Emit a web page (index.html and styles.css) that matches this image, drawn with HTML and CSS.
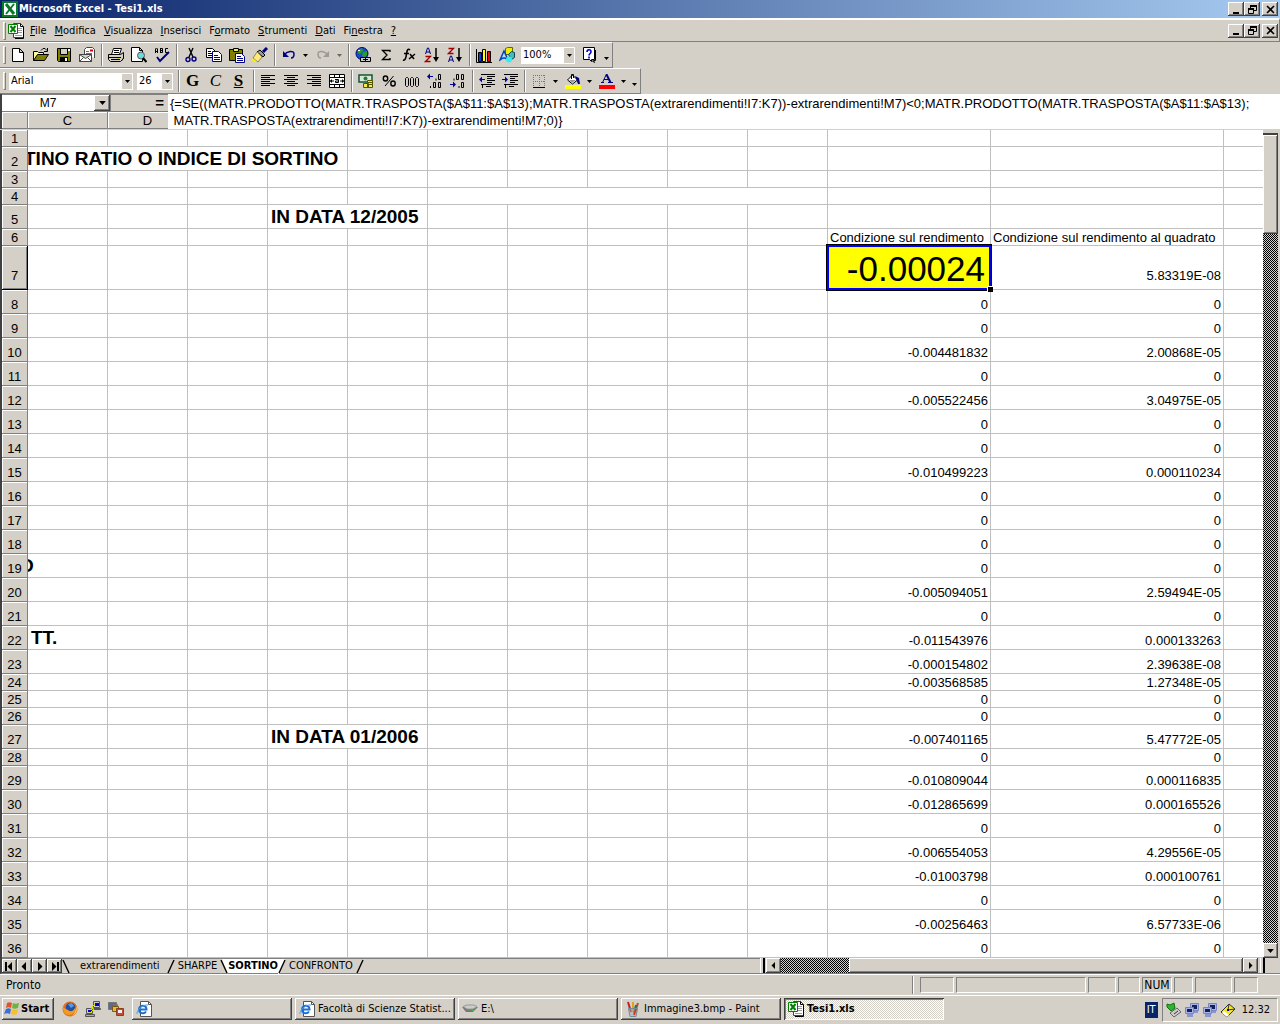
FILE: index.html
```html
<!DOCTYPE html>
<html lang="it">
<head>
<meta charset="utf-8">
<title>Microsoft Excel - Tesi1.xls</title>
<link rel="stylesheet" href="styles.css">
</head>
<body>
<svg class="defs" aria-hidden="true">
  <symbol id="xl" viewBox="0 0 16 16"><path fill="#fff" stroke="#444" d="M5.500 .5h7l3 3v11h-10z"/><path fill="none" stroke="#000" d="M15.500 4v11.500H7M12.500 .5v3h3"/><path stroke="#999" d="M10 5.500h4M10 7.500h4M10 9.500h4M7 12.500h7"/><path fill="#fff" stroke="#008000" d="M.5 1.500h9v9h-9z"/><path stroke="#008000" stroke-width="2" d="M2.500 3l5 6M7.500 3l-5 6"/></symbol>
  <symbol id="ie" viewBox="0 0 16 16"><path fill="#fff" stroke="#555" d="M4.500 .5h8l3 3v12h-11z"/><path fill="none" stroke="#555" d="M12.500 .5v3h3"/><path fill="none" stroke="#1c6fd4" stroke-width="2" d="M2.500 8.500h8c0-5-7-5-7.500 0 0 4 5 5 7 2"/><path fill="none" stroke="#4aa3f0" d="M1 13C0 10 7 3 12 4"/></symbol>
  <symbol id="down" viewBox="0 0 5 3"><path d="M0 0h5L2.500 3z"/></symbol>
  <symbol id="min" viewBox="0 0 9 9"><path d="M1 7h6v2H1z"/></symbol>
  <symbol id="restore" viewBox="0 0 9 9"><path fill="none" stroke="#000" d="M2.500 3V.5h6v5H6M.5 3.500h5v5h-5z"/><path d="M2 0h7v2H2zM0 3h6v2H0z"/></symbol>
  <symbol id="close" viewBox="0 0 9 9"><path stroke="#000" stroke-width="1.600" d="M1 1l7 7M8 1L1 8"/></symbol>
  <symbol id="net" viewBox="0 0 16 16"><path fill="#aab4e6" stroke="#7a84c0" d="M6.500 1.500h8v7h-8z"/><path fill="#10205a" d="M8 3h5v4H8z"/><path fill="#aab4e6" stroke="#7a84c0" d="M1.500 5.500h8v6h-8z"/><path fill="#10205a" d="M3 7h5v3H3z"/><path fill="#8a96cc" d="M3 12h6v3H3zM10 9h4v2h-4z"/></symbol>
</svg>

<header class="title">
  <svg class="i16" viewBox="0 0 16 16"><path fill="#fff" stroke="#0a7a2a" stroke-width="2" d="M1 1h14v14H1z"/><path stroke="#0a7a2a" stroke-width="3" d="M4 3l8 10"/><path stroke="#0a7a2a" stroke-width="2" d="M12 3L4 13"/></svg>
  <h1>Microsoft Excel - Tesi1.xls</h1>
  <div class="winbtns">
    <button aria-label="Riduci"><svg><use href="#min"/></svg></button><button aria-label="Ripristina"><svg><use href="#restore"/></svg></button><button class="x" aria-label="Chiudi"><svg><use href="#close"/></svg></button>
  </div>
</header>

<nav class="menubar">
  <span class="grip"></span>
  <svg class="i16"><use href="#xl"/></svg>
  <div class="menus">
    <button><u>F</u>ile</button><button><u>M</u>odifica</button><button><u>V</u>isualizza</button><button><u>I</u>nserisci</button><button>F<u>o</u>rmato</button><button><u>S</u>trumenti</button><button><u>D</u>ati</button><button>Fi<u>n</u>estra</button><button><u>?</u></button>
  </div>
  <div class="winbtns">
    <button aria-label="Riduci cartella"><svg><use href="#min"/></svg></button><button aria-label="Ripristina cartella"><svg><use href="#restore"/></svg></button><button class="x" aria-label="Chiudi cartella"><svg><use href="#close"/></svg></button>
  </div>
</nav>

<div class="toolbar">
  <span class="grip"></span>
  <button class="tb" aria-label="Nuovo"><svg viewBox="0 0 16 16"><path fill="#fff" stroke="#000" d="M2.500 1.500h7l4 4v9h-11zM9.500 1.500v4h4"/></svg></button>
  <button class="tb" aria-label="Apri"><svg viewBox="0 0 16 16"><path fill="#ff9" stroke="#000" d="M.5 13.500v-9h4l1 1h5v2"/><path fill="#808000" stroke="#000" d="M.5 13.500l4-6h11l-4 6z"/><path fill="none" stroke="#000" d="M8 3.500l2-2h2l2 2M14.500 1v3.500H11"/></svg></button>
  <button class="tb" aria-label="Salva"><svg viewBox="0 0 16 16"><path fill="#808000" stroke="#000" d="M1.500 1.500h13v13h-12l-1-1z"/><path fill="#d4d0c8" stroke="#000" d="M4.500 1.500h7v6h-7z"/><path d="M4 10h8v5H4z"/><path fill="#fff" d="M9 11h2v3H9zM12 2h2v2h-2z"/></svg></button>
  <button class="tb" aria-label="Posta"><svg viewBox="0 0 16 16"><path fill="#fff" stroke="#444" d="M5.500 7V2.500l2-2h6l2 2V11"/><path stroke="#d00" stroke-width="2" d="M11 3.500h3"/><path stroke="#66a" d="M7 4.500h3M7 6.500h6"/><path fill="#fff" stroke="#444" d="M.5 7.500h12v7H.5zM.5 7.500l6 4 6-4M.5 14.500l4-4M12.500 14.500l-4-4"/></svg></button>
  <span class="sep"></span>
  <button class="tb" aria-label="Stampa"><svg viewBox="0 0 16 16"><path fill="#fff" stroke="#000" d="M3.500 7.500l2-6h8l-2 6z"/><path stroke="#000" d="M6 3.500h5M6 5.500h5"/><path fill="#d4d0c8" stroke="#000" d="M.5 7.500h12l3-2v6l-3 3H2.500l-2-2z"/><path stroke="#000" d="M1 10.500h12M3 12.500h9M13.500 14l2-3"/><path fill="#cc0" d="M9 11h2v1H9z"/></svg></button>
  <button class="tb" aria-label="Anteprima"><svg viewBox="0 0 16 16"><path fill="#fff" stroke="#000" d="M.5 .5h8l3 3v11H.5zM8.500 .5v3h3"/><circle cx="10" cy="8.500" r="3.500" fill="#6dd" stroke="#555"/><path stroke="#000" stroke-width="2" d="M12 11l3.500 4"/></svg></button>
  <button class="tb" aria-label="Controllo ortografia"><svg viewBox="0 0 16 16"><path fill="none" stroke="#000" d="M1.500 6V2l1-1 1 1v4M1 4.500h3M6.500 1v5M6 1.500h2.500v4H6M6 3.500h2.500M14 1.500h-2.500v4H14"/><path fill="none" stroke="#000080" stroke-width="2" d="M3 10l3 4 9-9"/></svg></button>
  <span class="sep"></span>
  <button class="tb" aria-label="Taglia"><svg viewBox="0 0 16 16"><path fill="none" stroke="#000" stroke-width="1.400" d="M6 1l4 9M10 1L6 10"/><g fill="none" stroke="#000080" stroke-width="1.400"><circle cx="5" cy="12.500" r="2"/><circle cx="11" cy="12" r="2"/></g></svg></button>
  <button class="tb" aria-label="Copia"><svg viewBox="0 0 16 16"><path fill="#fff" stroke="#000" d="M.5 1.500h6l3 3v6h-9z"/><path stroke="#000" d="M2 4.500h3M2 6.500h4M2 8.500h4"/><path fill="#fff" stroke="#000080" d="M6.500 4.500h6l3 3v7h-9z"/><path stroke="#000080" d="M8 8.500h4M8 10.500h6M8 12.500h6"/></svg></button>
  <button class="tb" aria-label="Incolla"><svg viewBox="0 0 16 16"><path fill="#808000" stroke="#000" d="M.5 2.500h13v11H.5z"/><path fill="#ee6" stroke="#000" d="M4.500 1.500h5v3h-5z"/><path fill="#fff" stroke="#000080" d="M6.500 6.500h6l3 3v6h-9z"/><path stroke="#000080" d="M8 9.500h4M8 11.500h6M8 13.500h6"/></svg></button>
  <button class="tb" aria-label="Copia formato"><svg viewBox="0 0 16 16"><path stroke="#000080" stroke-width="3" d="M11 5l4-4"/><path fill="#999" stroke="#000" d="M8 3l5 5-2 2-6-5z"/><path fill="#ffe97a" stroke="#886" d="M5 5l5 5-4 5-5-4z"/><path stroke="#fe0" stroke-width="2" d="M0 12l4 3"/></svg></button>
  <span class="sep"></span>
  <button class="tb" aria-label="Annulla"><svg viewBox="0 0 16 16"><path fill="none" stroke="#000080" stroke-width="1.500" d="M3 8c3-4 10-5 10-1 0 3-1 4-3 4"/><path fill="#000080" d="M2 4v6h6z"/></svg></button>
  <button class="arr" aria-label="Elenco annulla"><svg><use href="#down"/></svg></button>
  <button class="tb off" aria-label="Ripeti"><svg viewBox="0 0 16 16"><path fill="none" stroke="#666" stroke-width="1.500" d="M13 8C10 4 3 3 3 7c0 3 1 4 3 4"/><path fill="#666" d="M14 4v6H8z"/></svg></button>
  <button class="arr off" aria-label="Elenco ripeti"><svg><use href="#down"/></svg></button>
  <span class="sep"></span>
  <button class="tb" aria-label="Collegamento"><svg viewBox="0 0 16 16"><circle cx="7" cy="6.500" r="6" fill="#1450c8" stroke="#000080"/><path fill="#2a9c2a" d="M3 3l4-2 1 3-3 3-2-1zM8 5l4-1v4l-3 3-2-3z"/><path fill="#fff" d="M3 3h2v1H3z"/><path fill="#ccc" stroke="#000" d="M5.500 10.500h5v4h-5zM10.500 10.500h5v4h-5z"/><path stroke="#000" d="M8 12.500h5"/></svg></button>
  <button class="tb" aria-label="Somma"><svg viewBox="0 0 16 16"><path fill="none" stroke="#000" stroke-width="1.300" d="M12 5V3.500H4.500L9 8l-4.500 4.500H12V11"/></svg></button>
  <button class="tb" aria-label="Funzione"><svg viewBox="0 0 16 16"><path fill="none" stroke="#000" stroke-width="1.600" d="M9 3C7 1 6 3 5.500 7S4 14 2 13M3 6.500h5"/><path stroke="#000" stroke-width="1.500" d="M9 7l4 5M14 7l-6 5"/></svg></button>
  <button class="tb" aria-label="Ordinamento crescente"><svg viewBox="0 0 16 16"><path fill="none" stroke="#000080" d="M1.500 7l2-6h1l2 6M2 5h4"/><path fill="none" stroke="#a00000" stroke-width="1.300" d="M1.500 9.500h5l-5 5h5"/><path stroke="#000" stroke-width="1.500" d="M12 1v12"/><path d="M9 10h6l-3 5z"/></svg></button>
  <button class="tb" aria-label="Ordinamento decrescente"><svg viewBox="0 0 16 16"><path fill="none" stroke="#a00000" stroke-width="1.300" d="M1.500 1.500h5l-5 5h5"/><path fill="none" stroke="#000080" d="M1.500 15l2-6h1l2 6M2 13h4"/><path stroke="#000" stroke-width="1.500" d="M12 1v12"/><path d="M9 10h6l-3 5z"/></svg></button>
  <span class="sep"></span>
  <button class="tb" aria-label="Grafico"><svg viewBox="0 0 16 16"><path fill="none" stroke="#000" d="M.5 2v13.500H16"/><path fill="#04c" stroke="#000" d="M2.500 5.500h3v9h-3z"/><path fill="#ff0" stroke="#000" d="M6.500 2.500h3v12h-3z"/><path fill="#e00" stroke="#000" d="M11.500 4.500h3v10h-3z"/></svg></button>
  <button class="tb" aria-label="Disegno"><svg viewBox="0 0 16 16"><path fill="#ee0" stroke="#660" d="M6.500 1.500l2-1h5v7h-7z"/><path fill="#4bb" stroke="#145" d="M9.500 7.500l3-3 3 1v5l-3 2z"/><path fill="#bfe0ff" stroke="#0044c0" stroke-width="1.500" d="M1 13L5 4l4 9-3-2h-2z"/><circle cx="10" cy="12.500" r="3" fill="#3ee"/></svg></button>
  <div class="combo zoom"><select aria-label="Zoom"><option>100%</option></select><span class="drop"><svg><use href="#down"/></svg></span></div>
  <button class="tb" aria-label="Guida"><svg viewBox="0 0 16 16"><path fill="#ffc" stroke="#000" d="M13.500 3v10.500h-2l1 2-4-3h-4"/><path fill="#fff" stroke="#000" d="M1.500 .5h11v12h-3v2l-2-2h-6z"/><path fill="none" stroke="#0000c0" stroke-width="1.600" d="M5 5c0-3 4-3 4-.5S7 6.500 7 8.500M7 9.500v2"/></svg></button>
  <button class="arr low" aria-label="Altri pulsanti"><svg><use href="#down"/></svg></button>
</div>

<div class="toolbar format">
  <span class="grip"></span>
  <div class="combo font"><select aria-label="Tipo di carattere"><option>Arial</option></select><span class="drop"><svg><use href="#down"/></svg></span></div>
  <div class="combo size"><select aria-label="Dimensione carattere"><option>26</option></select><span class="drop"><svg><use href="#down"/></svg></span></div>
  <span class="sep"></span>
  <button class="tb letter"><b>G</b></button>
  <button class="tb letter"><i>C</i></button>
  <button class="tb letter"><b><u>S</u></b></button>
  <span class="sep"></span>
  <button class="tb" aria-label="Allinea a sinistra"><svg viewBox="0 0 16 16"><path stroke="#000" d="M1 2.500h14M1 4.500h9M1 6.500h14M1 8.500h9M1 10.500h14M1 12.500h9"/></svg></button>
  <button class="tb" aria-label="Centra"><svg viewBox="0 0 16 16"><path stroke="#000" d="M1 2.500h14M4 4.500h8M1 6.500h14M4 8.500h8M1 10.500h14M4 12.500h8"/></svg></button>
  <button class="tb" aria-label="Allinea a destra"><svg viewBox="0 0 16 16"><path stroke="#000" d="M1 2.500h14M6 4.500h9M1 6.500h14M6 8.500h9M1 10.500h14M6 12.500h9"/></svg></button>
  <button class="tb" aria-label="Unisci e centra"><svg viewBox="0 0 16 16"><path fill="#fff" stroke="#000" d="M.5 1.500h15v13H.5zM.5 4.500h15M.5 11.500h15M5.500 1.500v3M10.500 1.500v3M5.500 11.500v3M10.500 11.500v3"/><path fill="none" stroke="#000" d="M1 8h4M11 8h4M6 6.500h3.500v3H6.500v-1.500h3"/><path d="M1 8l2-2v4zM15 8l-2-2v4z"/></svg></button>
  <span class="sep"></span>
  <button class="tb" aria-label="Valuta"><svg viewBox="0 0 16 16"><path fill="#d8e8d8" stroke="#153" stroke-width="1.500" d="M1 2h13v7H1z"/><circle cx="7.500" cy="5.500" r="2" fill="#297a3c"/><path fill="#ee4" stroke="#550" d="M9.500 7.500h5v7h-5zM5.500 10.500h5v4h-5zM10 9.500h4M10 11.500h4"/></svg></button>
  <button class="tb" aria-label="Stile percentuale"><svg viewBox="0 0 16 16"><path fill="none" stroke="#000" d="M12.500 3L4 13"/><g fill="none" stroke="#000" stroke-width="1.400"><ellipse cx="4.500" cy="5.500" rx="2.200" ry="2.500"/><ellipse cx="12" cy="10.500" rx="2.200" ry="2.500"/></g></svg></button>
  <button class="tb" aria-label="Stile separatore"><svg viewBox="0 0 16 16"><path fill="none" stroke="#000" d="M1.500 5.500l1-1h1l1 1v7l-1 1h-1l-1-1zM6.500 5.500l1-1h1l1 1v7l-1 1h-1l-1-1zM11.500 5.500l1-1h1l1 1v7l-1 1h-1l-1-1z"/></svg></button>
  <button class="tb" aria-label="Aumenta decimali"><svg viewBox="0 0 16 16"><path stroke="#0000a0" d="M2 3.500h4"/><path fill="#0000a0" d="M0 3.500l3-3v6z"/><path fill="none" stroke="#000" d="M11.500 1.500h2v5h-2zM6.500 9.500h2v5h-2zM11.500 9.500h2v5h-2zM9 5.500v2M3.500 13v2"/></svg></button>
  <button class="tb" aria-label="Diminuisci decimali"><svg viewBox="0 0 16 16"><path fill="none" stroke="#000" d="M6.500 1.500h2v5h-2zM11.500 1.500h2v5h-2zM11.500 9.500h2v5h-2zM4 5.500v2M9 13v2"/><path stroke="#0000a0" d="M0 11.500h4"/><path fill="#0000a0" d="M6 11.500l-3-3v6z"/></svg></button>
  <span class="sep"></span>
  <button class="tb" aria-label="Riduci rientro"><svg viewBox="0 0 16 16"><path stroke="#000" d="M2 1.500h14M8 3.500h8M8 5.500h5M8 7.500h8M8 9.500h5M2 11.500h14M3.500 12v3M7 13.500h5"/><path stroke="#0000a0" d="M1 6.500h5"/><path fill="#0000a0" d="M0 6.500l3-3v6z"/></svg></button>
  <button class="tb" aria-label="Aumenta rientro"><svg viewBox="0 0 16 16"><path stroke="#000" d="M2 1.500h14M8 3.500h8M8 5.500h5M8 7.500h8M8 9.500h5M2 11.500h14M3.500 12v3M7 13.500h5"/><path stroke="#0000a0" d="M0 6.500h5"/><path fill="#0000a0" d="M6 6.500l-3-3v6z"/></svg></button>
  <span class="sep"></span>
  <button class="tb" aria-label="Bordi"><svg viewBox="0 0 16 16"><path fill="none" stroke="#777" stroke-dasharray="1 1" d="M2 2.500h12M2.500 2v12M8.500 2v12M13.500 2v12M2 8.500h12"/><path stroke="#000" d="M2 14.500h12"/></svg></button>
  <button class="arr" aria-label="Elenco bordi"><svg><use href="#down"/></svg></button>
  <button class="tb" aria-label="Colore riempimento"><svg viewBox="0 0 16 16"><path fill="#fff" stroke="#000" d="M2.500 7l5-5 5 5-5 4z"/><path fill="#999" d="M4 7h7l-4 3z"/><path fill="none" stroke="#000" d="M6.500 6V1.500h2V5"/><path fill="#000080" d="M10 3l4 2 1 6h-2z"/><path fill="#ff0" d="M0 12h16v4H0z"/></svg></button>
  <button class="arr" aria-label="Elenco riempimento"><svg><use href="#down"/></svg></button>
  <button class="tb" aria-label="Colore carattere"><svg viewBox="0 0 16 16"><path fill="none" stroke="#000080" d="M3.500 9.500L7.500 1l4 8.500M5 6.500h5M2 9.500h3M9 9.500h5"/><path stroke="#000080" stroke-width="2" d="M7.500 1.500l4 8"/><path fill="#f00" d="M0 12h16v4H0z"/></svg></button>
  <button class="arr" aria-label="Elenco colore carattere"><svg><use href="#down"/></svg></button>
  <button class="arr low" aria-label="Altri pulsanti formato"><svg><use href="#down"/></svg></button>
</div>

<section class="formulabar">
  <div class="left">
    <div class="namerow">
      <input class="namebox" aria-label="Casella nome" value="M7">
      <button class="namedrop raised" aria-label="Elenco nomi"><svg><use href="#down"/></svg></button>
      <button class="equals" aria-label="Modifica formula">=</button>
    </div>
    <div class="colheads"><span class="corner"></span><span class="col">C</span><span class="col">D</span></div>
  </div>
  <textarea class="formula" aria-label="Barra della formula" rows="2" spellcheck="false">{=SE((MATR.PRODOTTO(MATR.TRASPOSTA($A$11:$A$13);MATR.TRASPOSTA(extrarendimenti!I7:K7))-extrarendimenti!M7)&lt;0;MATR.PRODOTTO(MATR.TRASPOSTA($A$11:$A$13);
 MATR.TRASPOSTA(extrarendimenti!I7:K7))-extrarendimenti!M7;0)}</textarea>
</section>

<main class="sheetarea">
<table class="sheet">
<colgroup><col class="cn"><col class="cs"><col class="cs"><col class="cs"><col class="cs"><col class="cs"><col class="cs"><col class="cs"><col class="cs"><col class="cs"><col class="cs"><col class="cm"><col class="cq"><col></colgroup>
<tr class="s"><th>1<td><td><td><td><td><td><td><td><td><td><td><td><td>
<tr><th>2<td colspan="4" class="head cut1">TINO RATIO O INDICE DI SORTINO<td><td><td><td><td><td><td><td><td>
<tr class="s"><th>3<td><td><td><td><td><td><td><td><td><td><td><td><td>
<tr class="s"><th>4<td><td><td><td><td><td colspan="5"><td><td><td>
<tr><th>5<td><td><td><td colspan="2" class="head">IN DATA 12/2005<td><td><td><td><td><td><td><td>
<tr class="s"><th>6<td><td><td><td><td><td><td><td><td><td><td class="lab">Condizione sul rendimento<td class="lab">Condizione sul rendimento al quadrato<td>
<tr class="t"><th class="cur">7<td><td><td><td><td><td><td><td><td><td><td class="active">-0.00024<td>5.83319E-08<td>
<tr><th>8<td><td><td><td><td><td><td><td><td><td><td>0<td>0<td>
<tr><th>9<td><td><td><td><td><td><td><td><td><td><td>0<td>0<td>
<tr><th>10<td><td><td><td><td><td><td><td><td><td><td>-0.004481832<td>2.00868E-05<td>
<tr><th>11<td><td><td><td><td><td><td><td><td><td><td>0<td>0<td>
<tr><th>12<td><td><td><td><td><td><td><td><td><td><td>-0.005522456<td>3.04975E-05<td>
<tr><th>13<td><td><td><td><td><td><td><td><td><td><td>0<td>0<td>
<tr><th>14<td><td><td><td><td><td><td><td><td><td><td>0<td>0<td>
<tr><th>15<td><td><td><td><td><td><td><td><td><td><td>-0.010499223<td>0.000110234<td>
<tr><th>16<td><td><td><td><td><td><td><td><td><td><td>0<td>0<td>
<tr><th>17<td><td><td><td><td><td><td><td><td><td><td>0<td>0<td>
<tr><th>18<td><td><td><td><td><td><td><td><td><td><td>0<td>0<td>
<tr><th>19<td class="head cut2">O<td><td><td><td><td><td><td><td><td><td>0<td>0<td>
<tr><th>20<td><td><td><td><td><td><td><td><td><td><td>-0.005094051<td>2.59494E-05<td>
<tr><th>21<td><td><td><td><td><td><td><td><td><td><td>0<td>0<td>
<tr><th>22<td class="head">TT.<td><td><td><td><td><td><td><td><td><td>-0.011543976<td>0.000133263<td>
<tr><th>23<td><td><td><td><td><td><td><td><td><td><td>-0.000154802<td>2.39638E-08<td>
<tr class="s"><th>24<td><td><td><td><td><td><td><td><td><td><td>-0.003568585<td>1.27348E-05<td>
<tr class="s"><th>25<td><td><td><td><td><td><td><td><td><td><td>0<td>0<td>
<tr class="s"><th>26<td><td><td><td><td><td><td><td><td><td><td>0<td>0<td>
<tr><th>27<td><td><td><td colspan="2" class="head">IN DATA 01/2006<td><td><td><td><td><td>-0.007401165<td>5.47772E-05<td>
<tr class="s"><th>28<td><td><td><td><td><td><td><td><td><td><td>0<td>0<td>
<tr><th>29<td><td><td><td><td><td><td><td><td><td><td>-0.010809044<td>0.000116835<td>
<tr><th>30<td><td><td><td><td><td><td><td><td><td><td>-0.012865699<td>0.000165526<td>
<tr><th>31<td><td><td><td><td><td><td><td><td><td><td>0<td>0<td>
<tr><th>32<td><td><td><td><td><td><td><td><td><td><td>-0.006554053<td>4.29556E-05<td>
<tr><th>33<td><td><td><td><td><td><td><td><td><td><td>-0.01003798<td>0.000100761<td>
<tr><th>34<td><td><td><td><td><td><td><td><td><td><td>0<td>0<td>
<tr><th>35<td><td><td><td><td><td><td><td><td><td><td>-0.00256463<td>6.57733E-06<td>
<tr><th>36<td><td><td><td><td><td><td><td><td><td><td>0<td>0<td>
</table>
<div class="vscroll">
  <span class="split"></span>
  <span class="vthumb raised"></span>
  <span class="hatch"></span>
  <button class="sb raised" aria-label="Scorri in basso"><svg><use href="#down"/></svg></button>
</div>
</main>

<div class="tabrow">
  <div class="tabs">
    <button class="navb raised" aria-label="Primo foglio"><svg viewBox="0 0 9 9"><path d="M0 0h2v9H0zM7 0v9L2.500 4.500z"/></svg></button>
    <button class="navb raised" aria-label="Foglio precedente"><svg viewBox="0 0 9 9"><path d="M6 0v9L1.500 4.500z"/></svg></button>
    <button class="navb raised" aria-label="Foglio successivo"><svg viewBox="0 0 9 9"><path d="M3 0v9l4.500-4.500z"/></svg></button>
    <button class="navb raised" aria-label="Ultimo foglio"><svg viewBox="0 0 9 9"><path d="M7 0h2v9H7zM2 0v9l4.500-4.500z"/></svg></button>
    <svg class="slant" viewBox="0 0 8 15"><path d="M1 1l6 13"/></svg>
    <button class="tab first">extrarendimenti</button>
    <svg class="slant" viewBox="0 0 8 15"><path d="M7 1L1 14"/></svg>
    <button class="tab">SHARPE</button>
    <svg class="slant" viewBox="0 0 8 15"><path class="fill" d="M2 0h6v15z"/><path d="M1 1l6 13"/></svg>
    <button class="tab on">SORTINO</button>
    <svg class="slant" viewBox="0 0 8 15"><path class="fill" d="M0 0h7L1 15H0z"/><path d="M7 1L1 14"/></svg>
    <button class="tab">CONFRONTO</button>
    <svg class="slant" viewBox="0 0 8 15"><path d="M7 1L1 14"/></svg>
  </div>
  <div class="hscroll">
    <span class="handle"></span>
    <button class="sb raised" aria-label="Scorri a sinistra"><svg viewBox="0 0 9 9"><path d="M6 1v7L2.500 4.500z"/></svg></button>
    <span class="hatch"></span>
    <span class="hthumb raised"></span>
    <button class="sb raised" aria-label="Scorri a destra"><svg viewBox="0 0 9 9"><path d="M3 1v7l3.500-3.500z"/></svg></button>
    <span class="handle"></span>
  </div>
</div>

<footer class="status">
  <span class="msg">Pronto</span>
  <span class="bar"></span>
  <span class="cell w34"></span><span class="cell w130"></span><span class="cell w28"></span><span class="cell w22"></span><span class="cell w30">NUM</span><span class="cell w19"></span><span class="cell w37"></span><span class="cell w24"></span>
</footer>

<div class="taskbar">
  <button class="start task"><svg class="i16" viewBox="0 0 16 16"><path fill="#e5532d" d="M3 2c2-1 3-1 5 0L7 7C5 6 4 6 2 7z"/><path fill="#6cb33f" d="M9 2c2 1 3 1 6 0l-1 5c-3 1-4 1-6 0z"/><path fill="#3a6fd0" d="M2 8c2-1 3-1 5 0l-1 5c-2-1-4-1-6 0z"/><path fill="#f5c02c" d="M8 8c2 1 4 1 6 0l-1 5c-3 1-4 1-6 0z"/></svg><b>Start</b></button>
  <div class="quick">
    <a href="#firefox" aria-label="Firefox"><svg class="i16" viewBox="0 0 16 16"><circle cx="8" cy="8" r="7.500" fill="#e0701a"/><circle cx="8.500" cy="6.500" r="4.800" fill="#2450a8"/><path fill="#5a9ae0" d="M6 3l4-1 2 3-3 2z"/><path fill="#f49a20" d="M1 4c0 4 2 3 5 5 2 2 5 2 7-2 1 4-2 7-6 7S0 10 1 4z"/><path fill="#ffdc50" d="M14 5c2 4 0 8-4 10 3-3 4-5 4-10z"/></svg></a>
    <a href="#putty" aria-label="PuTTY"><svg class="i16" viewBox="0 0 16 16"><path fill="#ccc" stroke="#555" d="M8.500 .5h6v6h-6zM1.500 7.500h6v5h-6z"/><path fill="#0000d0" d="M10 2h4v3h-4zM3 9h4v2H3z"/><path fill="#aaa" stroke="#555" d="M.5 13.500h9v2h-9zM7.500 7.500h8v1h-8z"/><path fill="none" stroke="#dd0" d="M10 3L6 7l3 1-4 4"/></svg></a>
    <a href="#winscp" aria-label="WinSCP"><svg class="i16" viewBox="0 0 16 16"><path fill="#5a6a98" stroke="#777" d="M.5 1.500h8v7h-8z"/><path fill="#e8b838" stroke="#7a5a10" d="M4.500 5.500h6v5h-6z"/><path fill="none" stroke="#777" d="M5.500 5V3.500h4V5"/><path fill="#c84830" stroke="#8a4020" d="M8.500 7.500h7v7h-7z"/><path fill="#eee" d="M10 9h4v3h-4z"/></svg></a>
  </div>
  <button class="task" aria-label="Internet Explorer"><svg class="i16"><use href="#ie"/></svg></button>
  <button class="task"><svg class="i16"><use href="#ie"/></svg><span>Facoltà di Scienze Statist...</span></button>
  <button class="task"><svg class="i16" viewBox="0 0 16 16"><path fill="#777" d="M0 6l4 5h7l5-5z"/><path fill="#ccc" stroke="#999" d="M1 5.500L5 4h7l3 1.500L11 8H5z"/><path fill="#2c2" d="M10 9h2v1h-2z"/></svg><span>E:\</span></button>
  <button class="task"><svg class="i16" viewBox="0 0 16 16"><path stroke="#c02020" stroke-width="2" d="M3 1l3 10"/><path stroke="#e0a020" stroke-width="2" d="M8 1v10"/><path stroke="#d04020" stroke-width="2" d="M13 2l-3 9"/><path stroke="#208040" stroke-width="2" d="M11 4l-2 8"/><path fill="#9ab0c8" fill-opacity=".5" stroke="#789" d="M3.500 7.500h9l-1.500 8H5z"/><path stroke="#d04020" stroke-width="2" d="M9 14l2-6"/></svg><span>Immagine3.bmp - Paint</span></button>
  <button class="task pressed"><svg class="i16"><use href="#xl"/></svg><span>Tesi1.xls</span></button>
  <span class="lang">IT</span>
  <div class="tray">
    <svg class="i16" viewBox="0 0 16 16"><path fill="#ccc" stroke="#666" d="M4 11l7-5 4 4-7 5z"/><path stroke="#333" d="M8 12l4-3"/><path fill="#2eb52e" stroke="#127012" d="M1 2l3 1 4-2 1 5-4 3-4-4z"/></svg>
    <svg class="i16"><use href="#net"/></svg>
    <svg class="i16"><use href="#net"/></svg>
    <svg class="i16" viewBox="0 0 16 16"><path fill="#f4e61c" stroke="#333" d="M1 10l8-8 6 5-8 8z"/><path fill="#fff" d="M2 11l2-2 5 4-2 2z"/><path fill="none" stroke="#333" d="M9 2l-1 6 7-1"/><path fill="#00c" d="M7 7h2v2H7z"/></svg>
    <time>12.32</time>
  </div>
</div>
</body>
</html>
```
FILE: styles.css
```css
:root {
  --face: #d4d0c8;
  --ui: "DejaVu Sans Condensed", "DejaVu Sans", sans-serif;
  --sheet: "Liberation Sans", Arial, sans-serif;
}
* { box-sizing: border-box; }
body {
  margin: 0;
  min-height: 100vh;
  display: flex;
  flex-direction: column;
  background: var(--face);
  color: #000;
  font: 11px/14px var(--ui);
}
button, input, select, textarea {
  margin: 0;
  padding: 0;
  border: 0;
  border-radius: 0;
  background: none;
  color: inherit;
  font: inherit;
}
svg { display: block; flex: none; }
.defs { width: 0; height: 0; position: absolute; }
.i16 { width: 16px; height: 16px; }
.raised {
  background: var(--face);
  box-shadow: inset -1px -1px #404040, inset 1px 1px #fff, inset -2px -2px #808080;
}

/* title bar */
.title {
  display: flex;
  align-items: center;
  height: 18px;
  padding: 0 2px;
  background: linear-gradient(90deg, #0a246a, #a6caf0);
  color: #fff;
}
.title h1 { margin: 0 0 0 1px; flex: 1; font-size: 11px; }
.winbtns { display: flex; }
.winbtns button {
  display: grid;
  place-items: center;
  width: 16px;
  height: 14px;
  background: var(--face);
  box-shadow: inset -1px -1px #404040, inset 1px 1px #fff, inset -2px -2px #808080;
}
.winbtns svg { width: 9px; height: 9px; }
.winbtns .x { margin-left: 2px; }

/* menu and tool bars */
.menubar {
  display: flex;
  align-items: center;
  height: 24px;
  padding: 0 1px 0 3px;
  border-top: 2px solid #fff;
  border-bottom: 1px solid #808080;
  border-right: 1px solid #808080;
}
.grip {
  flex: none;
  width: 3px;
  height: 18px;
  border: 1px solid;
  border-color: #fff #808080 #808080 #fff;
}
.menubar .i16 { margin-left: 2px; }
.menus { display: flex; flex: 1; gap: 8px; margin-left: 6px; }
.toolbar {
  display: flex;
  align-items: center;
  align-self: flex-start;
  height: 26px;
  padding-left: 3px;
  border-top: 1px solid #fff;
  border-right: 1px solid #808080;
  border-bottom: 1px solid #808080;
}
.tb { display: grid; place-items: center; width: 23px; height: 22px; }
.tb svg { width: 16px; height: 16px; }
.arr { display: grid; place-items: center; width: 11px; height: 22px; }
.arr svg, .drop svg { width: 5px; height: 3px; }
.arr.low { align-items: end; padding-bottom: 6px; }
.off { opacity: .5; }
.sep {
  width: 2px;
  height: 22px;
  margin: 0 1px 0 3px;
  border-left: 1px solid #808080;
  border-right: 1px solid #fff;
}
.letter { font: 17px/20px "Liberation Serif", serif; }
.combo { display: flex; height: 17px; background: #fff; }
.combo select { flex: 1; min-width: 0; padding-left: 2px; appearance: none; outline: 0; }
.drop { display: grid; place-items: center; width: 12px; border: 1px solid #fff; background: var(--face); }
.zoom { width: 54px; margin: 0 3px; }
.font { width: 124px; margin-left: 3px; }
.size { width: 36px; margin: 0 2px 0 4px; }

/* formula bar and column headings */
.formulabar {
  display: flex;
  height: 36px;
  border-bottom: 1px solid var(--face);
  background: #fff;
}
.left { width: 168px; overflow: hidden; background: var(--face); border-left: 2px solid #404040; }
.namerow { display: flex; height: 18px; border-top: 1px solid #808080; border-bottom: 1px solid #808080; }
.namebox { width: 92px; background: #fff; font: 12px/16px var(--sheet); text-align: center; }
.namedrop { display: grid; place-items: center; width: 16px; height: 16px; }
.namedrop svg { width: 7px; height: 4px; }
.equals { flex: 1; border-left: 1px solid #808080; padding-right: 4px; font: bold 15px/14px var(--sheet); text-align: right; }
.colheads { display: flex; height: 17px; }
.colheads span {
  flex: none;
  border-right: 1px solid #808080;
  border-bottom: 1px solid #808080;
  box-shadow: inset 1px 1px #fff;
}
.corner { width: 26px; }
.col { width: 80px; font: 13px/17px var(--sheet); text-align: center; }
.formula {
  flex: 1;
  min-width: 0;
  margin-top: 1px;
  padding-left: 2px;
  background: #fff;
  font: 13px/17px var(--sheet);
  white-space: pre;
  overflow: hidden;
  resize: none;
  outline: 0;
}

/* worksheet */
.sheetarea { display: flex; background: #fff; border-left: 2px solid #404040; }
.sheet {
  flex: 1;
  width: 0;
  table-layout: fixed;
  border-spacing: 0;
  font: 13px/15px var(--sheet);
}
.cn { width: 26px; }
.cs { width: 80px; }
.cm { width: 163px; }
.cq { width: 233px; }
.sheet tr { height: 24px; }
.sheet tr.s { height: 17px; }
.sheet tr.t { height: 44px; }
.sheet td, .sheet th {
  padding: 0 2px 1px;
  border-right: 1px solid #c0c0c0;
  border-bottom: 1px solid #c0c0c0;
  vertical-align: bottom;
  text-align: right;
  white-space: nowrap;
}
.sheet td:last-child { border-right: 0; }
.sheet th {
  padding: 0 0 1px;
  border-color: #808080;
  background: var(--face);
  box-shadow: inset 1px 1px #fff;
  font-weight: normal;
  text-align: center;
}
.sheet .s td, .sheet .s th { padding-bottom: 0; }
.sheet .t td, .sheet .t th { padding-bottom: 6px; }
.sheet th.cur { border-color: #000; box-shadow: inset 1px 1px #fff, inset -1px -1px #808080; }
.sheet .lab { text-align: left; }
.sheet .head {
  padding: 0 0 0 3px;
  font-size: 19px;
  line-height: 22px;
  font-weight: bold;
  text-align: left;
  overflow: hidden;
}
.sheet .cut1 { text-indent: -7px; }
.sheet .cut2 { text-indent: -12px; }
.sheet .t .active {
  position: relative;
  padding: 0 5px 0 0;
  background: #ff0;
  font-size: 35px;
  line-height: 40px;
}
.active::before {
  content: "";
  position: absolute;
  inset: -2px;
  border: 3px solid #0000ff;
  outline: 1px solid #000;
  outline-offset: -1px;
}
.active::after {
  content: "";
  position: absolute;
  right: -3px;
  bottom: -3px;
  width: 5px;
  height: 5px;
  border: solid #fff;
  border-width: 1px 0 0 1px;
  background: #000;
}
.hatch { flex: 1; background: repeating-conic-gradient(#000 0 25%, #d4d0c8 0 50%) 0 0 / 2px 2px; }
.vscroll { display: flex; flex-direction: column; width: 17px; border-right: 2px solid var(--face); }
.split { height: 5px; background: var(--face); border-bottom: 2px solid #404040; }
.vthumb { height: 99px; }
.sb { display: grid; place-items: center; width: 15px; height: 15px; }
.vscroll .sb svg { width: 7px; height: 4px; }

/* sheet tabs */
.tabrow { display: flex; height: 16px; border-left: 2px solid #404040; border-bottom: 1px solid #808080; }
.tabs { flex: 758; display: flex; min-width: 0; border-top: 1px solid #808080; }
.navb { display: grid; place-items: center; width: 15px; }
.navb svg, .hscroll .sb svg { width: 9px; height: 9px; }
.slant { width: 8px; height: 15px; }
.slant path { fill: none; stroke: #000; stroke-width: 1.4; }
.slant .fill { fill: #fff; stroke: none; }
.tab { padding: 0 3px; }
.tab.first { padding: 0 7px 0 10px; }
.tab.on { padding: 0; background: #fff; font-weight: bold; }
.hscroll { flex: 505; display: flex; padding-right: 15px; }
.handle { width: 5px; margin-right: 1px; border-left: 1px solid #fff; border-right: 2px solid #000; }
.hscroll .hatch { flex: 68; }
.hthumb { flex: 394; }
.hscroll .handle:last-child { margin: 0 0 0 2px; }

/* status bar */
.status {
  display: flex;
  align-items: center;
  gap: 2px;
  height: 22px;
  padding: 0 22px 0 6px;
  border-top: 1px solid #fff;
  border-bottom: 1px solid #fff;
}
.msg { flex: 1; font-size: 12px; }
.bar { width: 2px; height: 18px; margin-right: 4px; border-left: 1px solid #808080; border-right: 1px solid #fff; }
.cell {
  height: 16px;
  border: 1px solid;
  border-color: #808080 #fff #fff #808080;
  font-size: 12px;
  text-align: center;
}
.w19 { width: 19px; }
.w22 { width: 22px; }
.w24 { width: 24px; }
.w28 { width: 28px; }
.w30 { width: 30px; }
.w34 { width: 34px; }
.w37 { width: 37px; }
.w130 { width: 130px; }

/* taskbar */
.taskbar {
  display: flex;
  align-items: flex-start;
  gap: 3px;
  min-height: 28px;
  padding: 2px 2px 0;
}
.task {
  flex: 0 1 160px;
  display: flex;
  align-items: center;
  gap: 3px;
  height: 22px;
  padding: 0 4px;
  background: var(--face);
  box-shadow: inset -1px -1px #404040, inset 1px 1px #fff, inset -2px -2px #808080;
  white-space: nowrap;
}
.start { flex: 0 0 52px; gap: 1px; padding: 0 2px; }
.quick { display: flex; gap: 7px; margin: 3px 5px 0 5px; }
.pressed {
  background: repeating-conic-gradient(#fff 0 25%, #d4d0c8 0 50%) 0 0 / 2px 2px;
  box-shadow: inset 1px 1px #404040, inset -1px -1px #fff, inset 2px 2px #808080;
  font-weight: bold;
}
.lang { margin: 4px 1px 0 auto; padding: 1px 2px; background: #0a246a; color: #fff; }
.tray {
  display: flex;
  align-items: center;
  gap: 2px;
  height: 24px;
  padding: 0 7px 0 3px;
  border: 1px solid;
  border-color: #808080 #fff #fff #808080;
}
.tray time { margin-left: 4px; }
```
